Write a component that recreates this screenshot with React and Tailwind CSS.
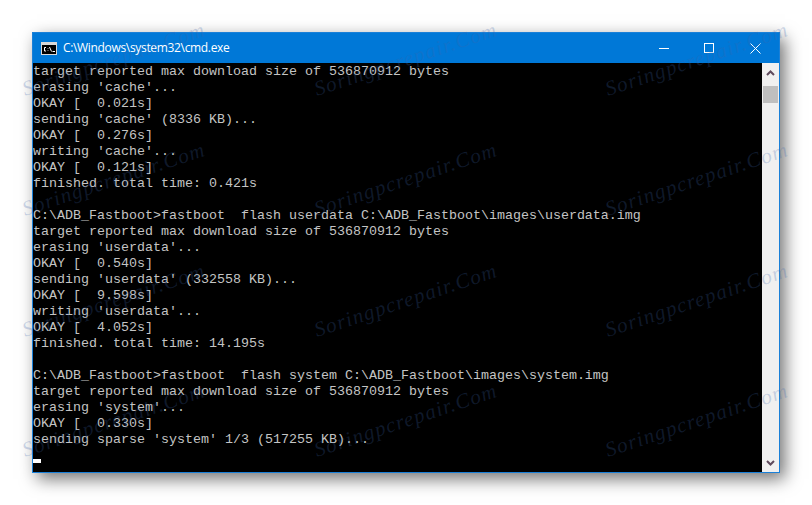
const lines = [
  'target reported max download size of 536870912 bytes',
  "erasing 'cache'...",
  'OKAY [  0.021s]',
  "sending 'cache' (8336 KB)...",
  'OKAY [  0.276s]',
  "writing 'cache'...",
  'OKAY [  0.121s]',
  'finished. total time: 0.421s',
  '',
  'C:\\ADB_Fastboot>fastboot  flash userdata C:\\ADB_Fastboot\\images\\userdata.img',
  'target reported max download size of 536870912 bytes',
  "erasing 'userdata'...",
  'OKAY [  0.540s]',
  "sending 'userdata' (332558 KB)...",
  'OKAY [  9.598s]',
  "writing 'userdata'...",
  'OKAY [  4.052s]',
  'finished. total time: 14.195s',
  '',
  'C:\\ADB_Fastboot>fastboot  flash system C:\\ADB_Fastboot\\images\\system.img',
  'target reported max download size of 536870912 bytes',
  "erasing 'system'...",
  'OKAY [  0.330s]',
  "sending sparse 'system' 1/3 (517255 KB)...",
]

const CmdIcon = () => (
  <svg width="16" height="13" viewBox="0 0 16 13" className="shrink-0">
    <rect x="0" y="0" width="16" height="13" fill="#d8d8d8" />
    <rect x="1" y="3" width="14" height="9" fill="#000" />
    <path d="M5 5.5H3.5V9H5M7 6v.6M7 8.2v.6M8.5 5l2 4.5M11.5 9.5H14" stroke="#fff" strokeWidth="1" fill="none" />
  </svg>
)

const WindowButtons = () => (
  <div className="flex items-center pr-[18px]">
    <svg width="10" height="10" viewBox="0 0 10 10" className="mr-[35px]">
      <path d="M0 5.5H10" stroke="#fff" strokeWidth="1" />
    </svg>
    <svg width="10" height="10" viewBox="0 0 10 10" className="mr-[36px]">
      <rect x="0.5" y="0.5" width="9" height="9" fill="none" stroke="#fff" strokeWidth="1" />
    </svg>
    <svg width="11" height="11" viewBox="0 0 11 11">
      <path d="M0.5 0.5L10.5 10.5M10.5 0.5L0.5 10.5" stroke="#fff" strokeWidth="1" />
    </svg>
  </div>
)

const Scrollbar = () => (
  <div className="w-[17px] shrink-0 bg-[#f0f0f0] flex flex-col items-center">
    <svg width="9" height="7" viewBox="0 0 9 7" className="mt-[6px]">
      <path d="M1 6L4.5 2.5L8 6" stroke="#5f4a5c" strokeWidth="2" fill="none" />
    </svg>
    <div className="w-[15px] h-[17px] mt-[10px] bg-[#bfbfbf]" />
    <svg width="9" height="7" viewBox="0 0 9 7" className="mt-auto mb-[5px]">
      <path d="M1 1L4.5 4.5L8 1" stroke="#5f4a5c" strokeWidth="2" fill="none" />
    </svg>
  </div>
)

export default function App() {
  return (
    <div className="relative w-[812px] h-[505px] overflow-hidden bg-white pt-[32px] pl-[32px]">
      <div className="w-[748px] h-[441px] flex flex-col border border-[#1a80d8] shadow-[5px_6px_16px_rgba(0,0,0,0.55)]">
        <div className="h-[30px] shrink-0 bg-[#0078d7] flex items-center justify-between">
          <div className="flex items-center pl-[8px] gap-[6px]">
            <CmdIcon />
            <span className="text-white text-[12px] tracking-[-0.33px] font-['Open_Sans',sans-serif]">C:\Windows\system32\cmd.exe</span>
          </div>
          <WindowButtons />
        </div>
        <div className="flex-1 flex min-h-0">
          <div className="flex-1 bg-black pt-[1px] text-[#c4c4c4] text-[13.33px] leading-[16px] font-['Liberation_Mono',monospace] flex flex-col">
            {lines.map((line, i) => (
              <div key={i} className="h-4 whitespace-pre">{line}</div>
            ))}
            <div className="w-[8px] h-[4px] bg-white mt-[11px]" />
          </div>
          <Scrollbar />
        </div>
      </div>
      <div className="absolute left-[-32px] top-[-1px] w-[875px] h-[482px] grid grid-cols-3 grid-rows-4 pointer-events-none">
        {Array.from({ length: 12 }, (_, i) => (
          <div key={i} className="flex items-center justify-center">
            <span className="-rotate-[18.5deg] whitespace-nowrap italic text-[21px] tracking-[1.2px] text-[#3c64aa]/25 font-['Liberation_Serif',serif]">
              Soringpcrepair.Com
            </span>
          </div>
        ))}
      </div>
    </div>
  )
}
